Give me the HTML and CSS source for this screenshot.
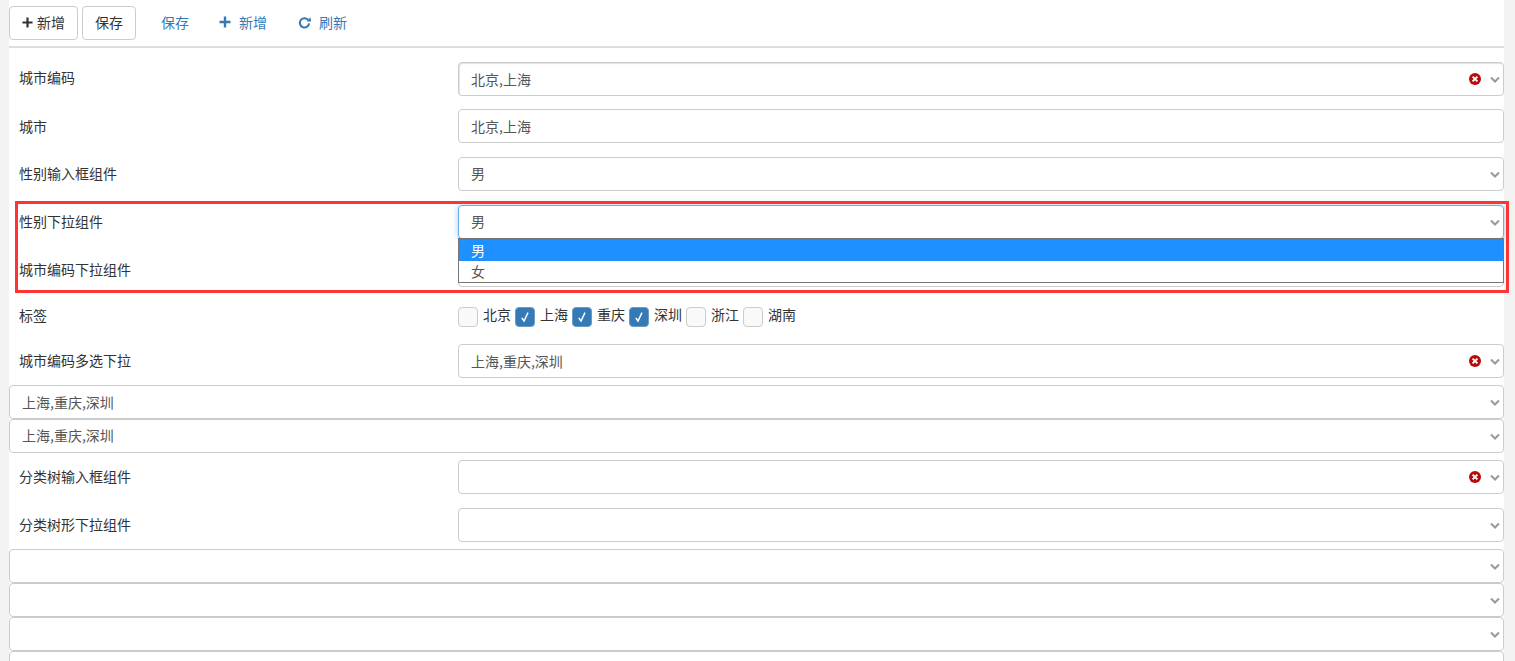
FILE: index.html
```html
<!DOCTYPE html>
<html lang="zh">
<head>
<meta charset="utf-8">
<title>表单</title>
<link rel="stylesheet" href="styles.css">
</head>
<body>
<svg class="defs" width="0" height="0" aria-hidden="true">
  <symbol id="chev" viewBox="0 0 10 8"><path d="M1 1.5 5 5.5 9 1.5" fill="none" stroke="#999" stroke-width="2"/></symbol>
  <symbol id="clr" viewBox="0 0 12 12"><circle cx="6" cy="6" r="6" fill="#b90a0a"/><path d="M3.6 3.6 8.4 8.4M8.4 3.6 3.6 8.4" stroke="#fff" stroke-width="2"/></symbol>
</svg>
<main class="page">
  <div class="toolbar">
    <button class="btn"><svg class="plus" viewBox="0 0 12 12"><path d="M6 0.5v11M0.5 6h11" stroke="#333" stroke-width="2.4"/></svg>新增</button>
    <button class="btn">保存</button>
    <button class="btn link gap">保存</button>
    <button class="btn link"><svg class="plus wide" viewBox="0 0 12 12"><path d="M6 0.5v11M0.5 6h11" stroke="#337ab7" stroke-width="2.4"/></svg>新增</button>
    <button class="btn link"><svg class="plus spin" viewBox="0 0 14 14"><path d="M11.2 4.6A5 5 0 1 0 12 8" fill="none" stroke="#337ab7" stroke-width="2.2"/><path d="M9.2 6 14 6 13.4 1.4Z" fill="#337ab7"/></svg>刷新</button>
  </div>
  <div class="form">
    <div class="row first">
      <label class="lab">城市编码</label>
      <div class="field strong"><span>北京,上海</span><svg class="clr"><use href="#clr"/></svg><svg class="chev"><use href="#chev"/></svg></div>
    </div>
    <div class="row">
      <label class="lab low">城市</label>
      <div class="field"><span>北京,上海</span></div>
    </div>
    <div class="row">
      <label class="lab">性别输入框组件</label>
      <div class="field up"><span>男</span><svg class="chev"><use href="#chev"/></svg></div>
    </div>
    <div class="row">
      <label class="lab">性别下拉组件</label>
      <div class="field focus up"><span>男</span><svg class="chev"><use href="#chev"/></svg>
        <div class="menu"><div class="opt on">男</div><div class="opt">女</div></div>
      </div>
    </div>
    <div class="row">
      <label class="lab">城市编码下拉组件</label>
      <div class="field"></div>
    </div>
    <div class="row checks">
      <label class="lab">标签</label>
      <div class="boxes">
        <span class="item"><i class="box"></i>北京</span>
        <span class="item"><i class="box on"><svg viewBox="0 0 12 12"><path d="M2.8 6.8 5 10 9 1.6" fill="none" stroke="#fff" stroke-width="1.5"/></svg></i>上海</span>
        <span class="item"><i class="box on"><svg viewBox="0 0 12 12"><path d="M2.8 6.8 5 10 9 1.6" fill="none" stroke="#fff" stroke-width="1.5"/></svg></i>重庆</span>
        <span class="item"><i class="box on"><svg viewBox="0 0 12 12"><path d="M2.8 6.8 5 10 9 1.6" fill="none" stroke="#fff" stroke-width="1.5"/></svg></i>深圳</span>
        <span class="item"><i class="box"></i>浙江</span>
        <span class="item"><i class="box"></i>湖南</span>
      </div>
    </div>
    <div class="row tight">
      <label class="lab">城市编码多选下拉</label>
      <div class="field"><span>上海,重庆,深圳</span><svg class="clr"><use href="#clr"/></svg><svg class="chev"><use href="#chev"/></svg></div>
    </div>
    <div class="field full"><span>上海,重庆,深圳</span><svg class="chev"><use href="#chev"/></svg></div>
    <div class="field full last up"><span>上海,重庆,深圳</span><svg class="chev"><use href="#chev"/></svg></div>
    <div class="row">
      <label class="lab">分类树输入框组件</label>
      <div class="field"><svg class="clr"><use href="#clr"/></svg><svg class="chev"><use href="#chev"/></svg></div>
    </div>
    <div class="row tight">
      <label class="lab">分类树形下拉组件</label>
      <div class="field"><svg class="chev"><use href="#chev"/></svg></div>
    </div>
    <div class="field full"><svg class="chev"><use href="#chev"/></svg></div>
    <div class="field full"><svg class="chev"><use href="#chev"/></svg></div>
    <div class="field full"><svg class="chev"><use href="#chev"/></svg></div>
    <div class="field full"><svg class="chev"><use href="#chev"/></svg></div>
  </div>
  <div class="mark"></div>
</main>
</body>
</html>
```
FILE: styles.css
```css
* { box-sizing: border-box; }
html, body { margin: 0; height: 661px; overflow: hidden; background: #f3f3f3; }
body {
  padding: 0 11px 0 9px;
  font: 14px/20px "Noto Sans CJK SC", "Liberation Sans", sans-serif;
  color: #333;
}
.defs { position: absolute; }
.page { position: relative; background: #fff; height: 661px; }

.toolbar {
  display: flex;
  gap: 4px;
  height: 48px;
  padding-top: 6px;
  border-bottom: 2px solid #ddd;
}
.btn {
  display: inline-flex;
  align-items: center;
  justify-content: center;
  height: 34px;
  padding: 0 12px 2px;
  border: 1px solid #ccc;
  border-radius: 4px;
  background: #fff;
  color: #333;
  font: inherit;
}
.btn.link { border-color: transparent; color: #337ab7; }
.btn.gap { margin-left: 8px; }
.plus { width: 11px; height: 11px; margin-right: 4px; flex: none; }
.plus.wide { width: 12px; height: 12px; margin-right: 8px; }
.plus.spin { width: 13px; height: 13px; margin-left: 1px; margin-right: 8px; }

.form { padding-top: 14px; }
.row { display: flex; align-items: center; height: 34px; margin-bottom: 14px; padding-left: 10px; }
.row.first { margin-bottom: 13px; }
.row.tight { margin-bottom: 7px; }
.row.checks { height: 29px; margin-bottom: 14px; align-items: flex-start; padding-top: 3px; }
.row.checks .lab { margin-top: 1px; }
.row.first .lab { margin-top: -4px; }
.lab { width: 439px; flex: none; margin-top: -2px; }
.lab.low { margin-top: 0; }

.field {
  position: relative;
  display: flex;
  align-items: center;
  flex: 1;
  height: 34px;
  padding: 0 12px;
  border: 1px solid #ccc;
  border-radius: 4px;
  background: #fff;
  color: #555;
}
.field.up { padding-bottom: 2px; }
.field.strong { box-shadow: inset 1px 1px 1px rgba(0, 0, 0, .12); }
.field.focus { border-color: #66afe9; box-shadow: 0 0 6px rgba(102, 175, 233, .6); }
.field.full { display: flex; }
.field.last { margin-bottom: 7px; }
.chev { position: absolute; right: 3px; top: 13px; width: 10px; height: 8px; }
.clr { position: absolute; right: 22px; top: 10px; width: 12px; height: 12px; }

.menu {
  position: absolute;
  left: -1px;
  right: -1px;
  top: 32px;
  z-index: 2;
  height: 45px;
  border: 1px solid #767676;
  border-top-width: 2px;
  background: #fff;
}
.opt { height: 21px; padding: 0 12px; line-height: 20px; color: #555; }
.opt.on { background: #1e90ff; color: #fff; }

.boxes { display: flex; gap: 4px; }
.item { display: flex; gap: 5px; line-height: 20px; }
.box {
  display: block;
  width: 20px;
  height: 20px;
  margin-top: 3px;
  border: 1px solid #ccc;
  border-radius: 4px;
  background: #f9f9f9;
}
.box.on { background: #337ab7; border-color: #6f9ac4; padding: 3px; }
.box svg { display: block; width: 12px; height: 12px; }

.mark {
  position: absolute;
  left: 6px;
  top: 201px;
  width: 1494px;
  height: 92px;
  border: 3px solid #ff3333;
  z-index: 3;
  pointer-events: none;
}
```
